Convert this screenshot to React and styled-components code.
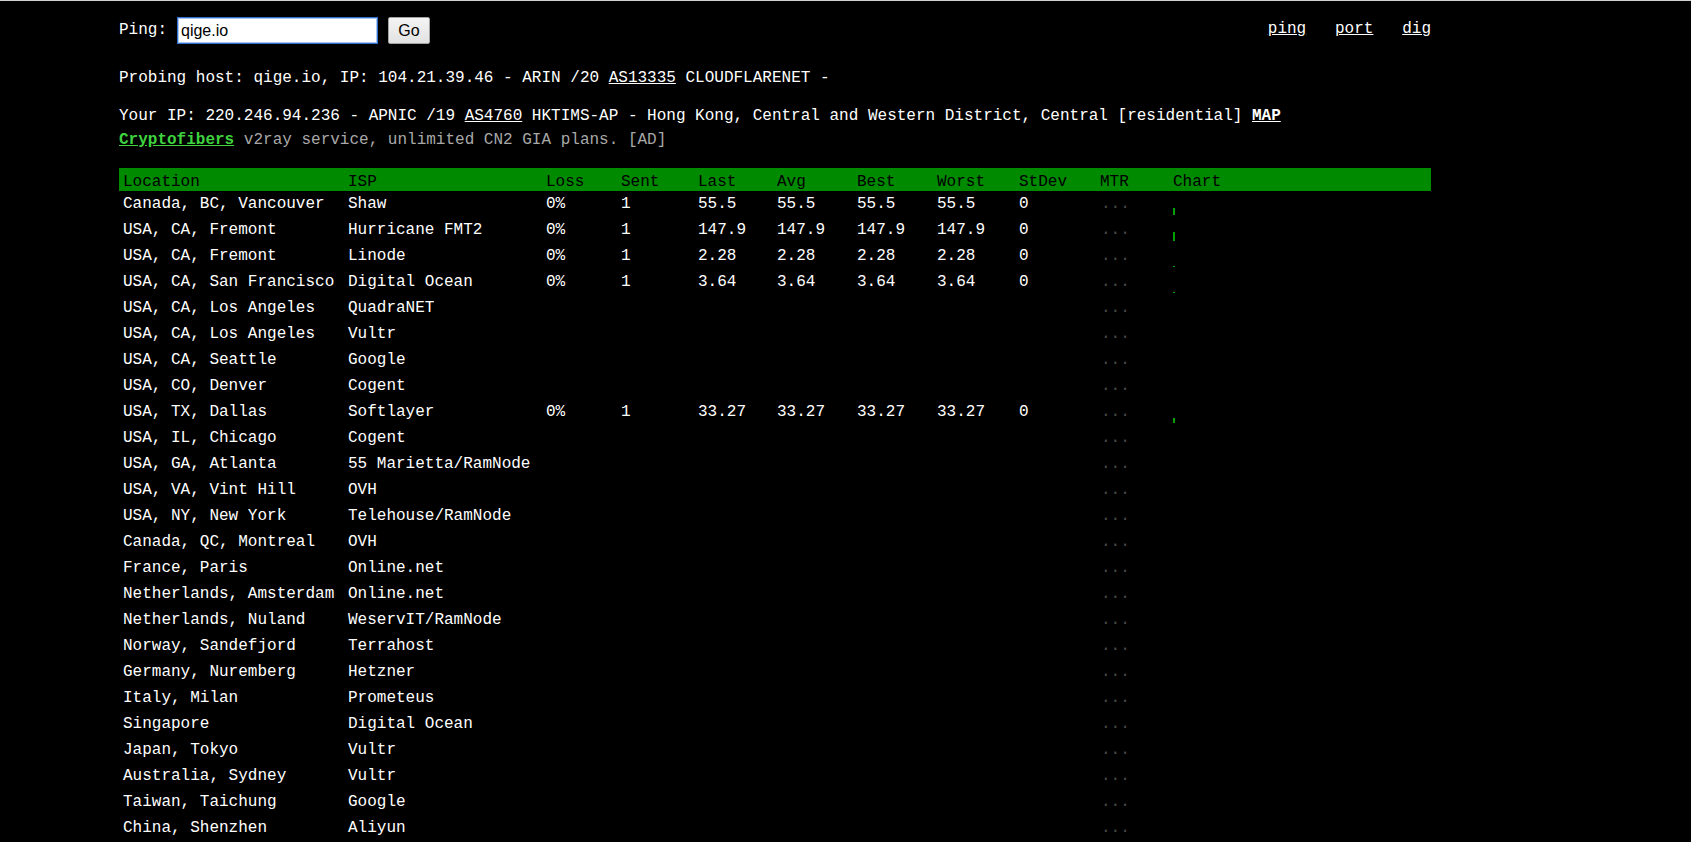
import React from "react";
import styled, { createGlobalStyle } from "styled-components";

const GlobalStyle = createGlobalStyle`
  html, body {
    margin: 0;
    padding: 0;
    background: #000;
  }
`;

const rows = [
  { loc: "Canada, BC, Vancouver", isp: "Shaw", stats: ["0%", "1", "55.5", "55.5", "55.5", "55.5", "0"], bar: 7 },
  { loc: "USA, CA, Fremont", isp: "Hurricane FMT2", stats: ["0%", "1", "147.9", "147.9", "147.9", "147.9", "0"], bar: 9 },
  { loc: "USA, CA, Fremont", isp: "Linode", stats: ["0%", "1", "2.28", "2.28", "2.28", "2.28", "0"], bar: 1 },
  { loc: "USA, CA, San Francisco", isp: "Digital Ocean", stats: ["0%", "1", "3.64", "3.64", "3.64", "3.64", "0"], bar: 1 },
  { loc: "USA, CA, Los Angeles", isp: "QuadraNET" },
  { loc: "USA, CA, Los Angeles", isp: "Vultr" },
  { loc: "USA, CA, Seattle", isp: "Google" },
  { loc: "USA, CO, Denver", isp: "Cogent" },
  { loc: "USA, TX, Dallas", isp: "Softlayer", stats: ["0%", "1", "33.27", "33.27", "33.27", "33.27", "0"], bar: 5 },
  { loc: "USA, IL, Chicago", isp: "Cogent" },
  { loc: "USA, GA, Atlanta", isp: "55 Marietta/RamNode" },
  { loc: "USA, VA, Vint Hill", isp: "OVH" },
  { loc: "USA, NY, New York", isp: "Telehouse/RamNode" },
  { loc: "Canada, QC, Montreal", isp: "OVH" },
  { loc: "France, Paris", isp: "Online.net" },
  { loc: "Netherlands, Amsterdam", isp: "Online.net" },
  { loc: "Netherlands, Nuland", isp: "WeservIT/RamNode" },
  { loc: "Norway, Sandefjord", isp: "Terrahost" },
  { loc: "Germany, Nuremberg", isp: "Hetzner" },
  { loc: "Italy, Milan", isp: "Prometeus" },
  { loc: "Singapore", isp: "Digital Ocean" },
  { loc: "Japan, Tokyo", isp: "Vultr" },
  { loc: "Australia, Sydney", isp: "Vultr" },
  { loc: "Taiwan, Taichung", isp: "Google" },
  { loc: "China, Shenzhen", isp: "Aliyun" },
];

const headers = ["Location", "ISP", "Loss", "Sent", "Last", "Avg", "Best", "Worst", "StDev", "MTR", "Chart"];

const Page = styled.div`
  min-height: 100vh;
  border-top: 1px solid #d2d2d2;
  box-sizing: border-box;
  background: #000;
  color: #fff;
  font-family: "Liberation Mono", "DejaVu Sans Mono", monospace;
  font-size: 16px;
`;

const Wrap = styled.div`
  width: 1312px;
  margin-left: 119px;
`;

const TopBar = styled.div`
  display: flex;
  justify-content: space-between;
  align-items: flex-start;
  padding-top: 16px;
`;

const PingForm = styled.form`
  display: flex;
  align-items: center;
  gap: 10px;
  margin: 0;
`;

const Label = styled.span`
  line-height: 27px;
`;

const HostInput = styled.input`
  width: 201px;
  height: 27px;
  box-sizing: border-box;
  border: 1px solid #2f6fd0;
  box-shadow: inset 0 0 0 1px #a9c6ef;
  padding: 1px 3px;
  font-family: "Liberation Sans", Arial, sans-serif;
  font-size: 16px;
  color: #000;
  background: #fff;
  outline: none;
`;

const GoButton = styled.button`
  height: 27px;
  width: 42px;
  box-sizing: border-box;
  border: 1px solid #a3a3a3;
  border-radius: 2px;
  background: linear-gradient(#f4f4f4, #e2e2e2);
  font-family: "Liberation Sans", Arial, sans-serif;
  font-size: 16px;
  color: #000;
  padding: 0;
`;

const Nav = styled.nav`
  display: flex;
  gap: 28.8px;
  padding-top: 2px;
  line-height: 20px;
`;

const NavLink = styled.a`
  color: #fff;
  text-decoration: underline;
`;

const InfoLine = styled.div`
  line-height: 24px;
  white-space: pre;
  margin-top: ${(p) => p.$top || 0}px;
  color: ${(p) => (p.$dim ? "#a8a8a8" : "#fff")};
`;

const Ul = styled.span`
  text-decoration: underline;
`;

const MapLink = styled.a`
  color: #fff;
  font-weight: bold;
  text-decoration: underline;
`;

const AdLink = styled.a`
  color: #3fd23f;
  font-weight: bold;
  text-decoration: underline;
`;

const Table = styled.div`
  margin-top: 16px;
`;

const Row = styled.div`
  display: grid;
  grid-template-columns: 225px 198px 75px 77px 79px 80px 80px 82px 81px 73px 1fr;
  height: ${(p) => (p.$head ? 23 : 26)}px;
  line-height: ${(p) => (p.$head ? 29 : 26)}px;
  background: ${(p) => (p.$head ? "#008a00" : "transparent")};
  color: ${(p) => (p.$head ? "#000" : "#fff")};
`;

const Cell = styled.div`
  padding-left: 4px;
  white-space: pre;
`;

const Dots = styled(Cell)`
  color: #4a4a4a;
  padding-left: 5px;
`;

const ChartCell = styled.div`
  display: flex;
  align-items: flex-end;
  padding: 0 0 2px 4px;
`;

const Bar = styled.div`
  width: 2px;
  background: #00a000;
`;

export default function App() {
  return (
    <Page>
      <GlobalStyle />
      <Wrap>
        <TopBar>
          <PingForm onSubmit={(e) => e.preventDefault()}>
            <Label>Ping:</Label>
            <HostInput defaultValue="qige.io" />
            <GoButton type="submit">Go</GoButton>
          </PingForm>
          <Nav>
            <NavLink href="#">ping</NavLink>
            <NavLink href="#">port</NavLink>
            <NavLink href="#">dig</NavLink>
          </Nav>
        </TopBar>

        <InfoLine $top={22}>
          Probing host: qige.io, IP: 104.21.39.46 - ARIN /20 <Ul>AS13335</Ul> CLOUDFLARENET -
        </InfoLine>
        <InfoLine $top={14}>
          Your IP: 220.246.94.236 - APNIC /19 <Ul>AS4760</Ul> HKTIMS-AP - Hong Kong, Central and Western District, Central [residential] <MapLink href="#">MAP</MapLink>
        </InfoLine>
        <InfoLine $dim>
          <AdLink href="#">Cryptofibers</AdLink> v2ray service, unlimited CN2 GIA plans. [AD]
        </InfoLine>

        <Table>
          <Row $head>
            {headers.map((h) => (
              <Cell key={h}>{h}</Cell>
            ))}
          </Row>
          {rows.map((r, i) => {
            const stats = r.stats || ["", "", "", "", "", "", ""];
            return (
              <Row key={i}>
                <Cell>{r.loc}</Cell>
                <Cell>{r.isp}</Cell>
                {stats.map((s, j) => (
                  <Cell key={j}>{s}</Cell>
                ))}
                <Dots>...</Dots>
                <ChartCell>{r.bar ? <Bar style={{ height: r.bar }} /> : null}</ChartCell>
              </Row>
            );
          })}
        </Table>
      </Wrap>
    </Page>
  );
}
